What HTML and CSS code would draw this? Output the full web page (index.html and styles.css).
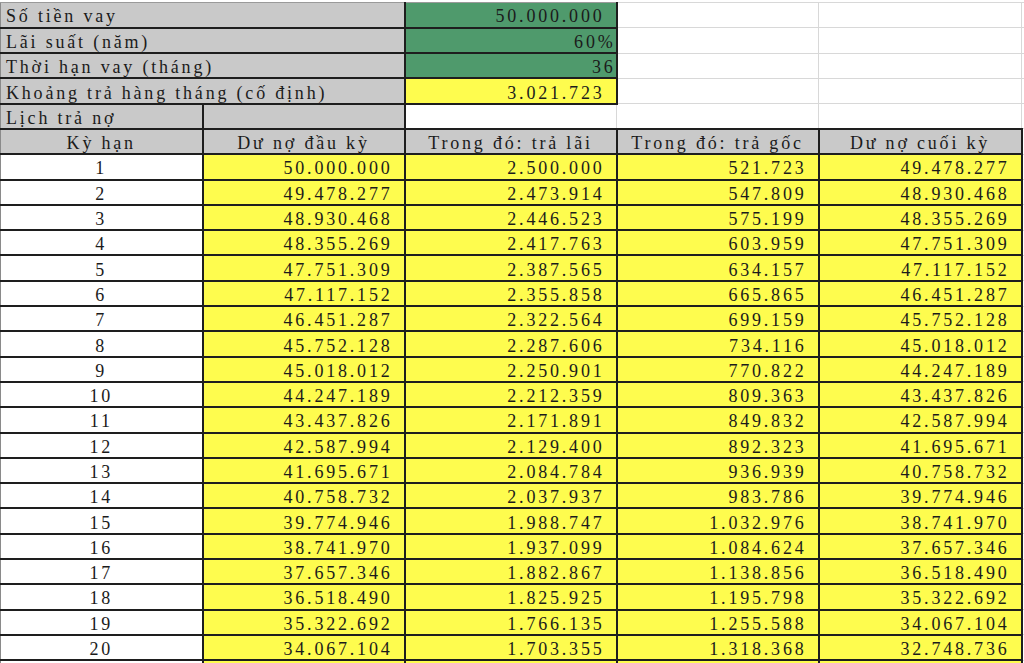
FILE: index.html
```html
<!DOCTYPE html>
<html lang="vi">
<head>
<meta charset="utf-8">
<title>Lịch trả nợ</title>
<link rel="stylesheet" href="styles.css">
</head>
<body>
<table class="sheet">
  <colgroup>
    <col class="c-a"><col class="c-b"><col class="c-c"><col class="c-d"><col class="c-e"><col class="c-f">
  </colgroup>
  <tbody>
    <tr class="first">
      <td class="label" colspan="2">Số tiền vay</td>
      <td class="green num">50.000.000</td>
      <td class="grid"></td><td class="grid"></td><td class="grid"></td>
    </tr>
    <tr>
      <td class="label" colspan="2">Lãi suất (năm)</td>
      <td class="green raw">60%</td>
      <td class="grid"></td><td class="grid"></td><td class="grid"></td>
    </tr>
    <tr>
      <td class="label" colspan="2">Thời hạn vay (tháng)</td>
      <td class="green raw">36</td>
      <td class="grid"></td><td class="grid"></td><td class="grid"></td>
    </tr>
    <tr>
      <td class="label" colspan="2">Khoảng trả hàng tháng (cố định)</td>
      <td class="yellow num">3.021.723</td>
      <td class="grid"></td><td class="grid"></td><td class="grid"></td>
    </tr>
    <tr>
      <td class="label">Lịch trả nợ</td>
      <td class="label"></td>
      <td class="grid blank"></td>
      <td class="grid"></td><td class="grid"></td><td class="grid"></td>
    </tr>
    <tr class="head">
      <th>Kỳ hạn</th>
      <th>Dư nợ đầu kỳ</th>
      <th>Trong đó: trả lãi</th>
      <th>Trong đó: trả gốc</th>
      <th>Dư nợ cuối kỳ</th>
      <td class="grid"></td>
    </tr>
    <tr><td class="idx">1</td><td class="yellow num">50.000.000</td><td class="yellow num">2.500.000</td><td class="yellow num">521.723</td><td class="yellow num">49.478.277</td><td class="grid"></td></tr>
    <tr><td class="idx">2</td><td class="yellow num">49.478.277</td><td class="yellow num">2.473.914</td><td class="yellow num">547.809</td><td class="yellow num">48.930.468</td><td class="grid"></td></tr>
    <tr><td class="idx">3</td><td class="yellow num">48.930.468</td><td class="yellow num">2.446.523</td><td class="yellow num">575.199</td><td class="yellow num">48.355.269</td><td class="grid"></td></tr>
    <tr><td class="idx">4</td><td class="yellow num">48.355.269</td><td class="yellow num">2.417.763</td><td class="yellow num">603.959</td><td class="yellow num">47.751.309</td><td class="grid"></td></tr>
    <tr><td class="idx">5</td><td class="yellow num">47.751.309</td><td class="yellow num">2.387.565</td><td class="yellow num">634.157</td><td class="yellow num">47.117.152</td><td class="grid"></td></tr>
    <tr><td class="idx">6</td><td class="yellow num">47.117.152</td><td class="yellow num">2.355.858</td><td class="yellow num">665.865</td><td class="yellow num">46.451.287</td><td class="grid"></td></tr>
    <tr><td class="idx">7</td><td class="yellow num">46.451.287</td><td class="yellow num">2.322.564</td><td class="yellow num">699.159</td><td class="yellow num">45.752.128</td><td class="grid"></td></tr>
    <tr><td class="idx">8</td><td class="yellow num">45.752.128</td><td class="yellow num">2.287.606</td><td class="yellow num">734.116</td><td class="yellow num">45.018.012</td><td class="grid"></td></tr>
    <tr><td class="idx">9</td><td class="yellow num">45.018.012</td><td class="yellow num">2.250.901</td><td class="yellow num">770.822</td><td class="yellow num">44.247.189</td><td class="grid"></td></tr>
    <tr><td class="idx">10</td><td class="yellow num">44.247.189</td><td class="yellow num">2.212.359</td><td class="yellow num">809.363</td><td class="yellow num">43.437.826</td><td class="grid"></td></tr>
    <tr><td class="idx">11</td><td class="yellow num">43.437.826</td><td class="yellow num">2.171.891</td><td class="yellow num">849.832</td><td class="yellow num">42.587.994</td><td class="grid"></td></tr>
    <tr><td class="idx">12</td><td class="yellow num">42.587.994</td><td class="yellow num">2.129.400</td><td class="yellow num">892.323</td><td class="yellow num">41.695.671</td><td class="grid"></td></tr>
    <tr><td class="idx">13</td><td class="yellow num">41.695.671</td><td class="yellow num">2.084.784</td><td class="yellow num">936.939</td><td class="yellow num">40.758.732</td><td class="grid"></td></tr>
    <tr><td class="idx">14</td><td class="yellow num">40.758.732</td><td class="yellow num">2.037.937</td><td class="yellow num">983.786</td><td class="yellow num">39.774.946</td><td class="grid"></td></tr>
    <tr><td class="idx">15</td><td class="yellow num">39.774.946</td><td class="yellow num">1.988.747</td><td class="yellow num">1.032.976</td><td class="yellow num">38.741.970</td><td class="grid"></td></tr>
    <tr><td class="idx">16</td><td class="yellow num">38.741.970</td><td class="yellow num">1.937.099</td><td class="yellow num">1.084.624</td><td class="yellow num">37.657.346</td><td class="grid"></td></tr>
    <tr><td class="idx">17</td><td class="yellow num">37.657.346</td><td class="yellow num">1.882.867</td><td class="yellow num">1.138.856</td><td class="yellow num">36.518.490</td><td class="grid"></td></tr>
    <tr><td class="idx">18</td><td class="yellow num">36.518.490</td><td class="yellow num">1.825.925</td><td class="yellow num">1.195.798</td><td class="yellow num">35.322.692</td><td class="grid"></td></tr>
    <tr><td class="idx">19</td><td class="yellow num">35.322.692</td><td class="yellow num">1.766.135</td><td class="yellow num">1.255.588</td><td class="yellow num">34.067.104</td><td class="grid"></td></tr>
    <tr><td class="idx">20</td><td class="yellow num">34.067.104</td><td class="yellow num">1.703.355</td><td class="yellow num">1.318.368</td><td class="yellow num">32.748.736</td><td class="grid"></td></tr>
    <tr class="cut"><td class="idx"></td><td class="yellow"></td><td class="yellow"></td><td class="yellow"></td><td class="yellow"></td><td class="grid"></td></tr>
  </tbody>
</table>
</body>
</html>
```
FILE: styles.css
```css
html, body {
  margin: 0;
  padding: 0;
  background: #ffffff;
  overflow: hidden;
  height: 663px;
}

.sheet {
  margin-top: 2px;
  width: 1024px;
  table-layout: fixed;
  border-collapse: collapse;
  font-family: "Liberation Serif", "DejaVu Serif", serif;
  font-size: 18px;
  letter-spacing: 2.8px;
  color: #1b1b1b;
}

.c-a { width: 202px; }
.c-b { width: 202px; }
.c-c { width: 212px; }
.c-d { width: 202px; }
.c-e { width: 203px; }
.c-f { width: 3px; }

.sheet tr { height: 25.3px; }

.sheet td, .sheet th {
  padding: 3px 0 0 0;
  line-height: 20px;
  white-space: nowrap;
  overflow: hidden;
  vertical-align: middle;
  font-weight: normal;
  border: 2px solid #1e1e1e;
}

.sheet .grid {
  border: 1px solid #d8d8d8;
  background: #ffffff;
}

.sheet .blank {
  border-left: 2px solid #1e1e1e;
}

.label {
  background: #c9c9c9;
  text-align: left;
  padding-left: 5px !important;
}

.sheet tr.first td.label,
.sheet tr.first td.green {
  border-top: 1px solid #9a9a9a;
}

.green {
  background: #4f9a6c;
  text-align: right;
}

.yellow {
  background: #fefc4e;
  text-align: right;
}

.num { padding-right: 11px !important; }
.raw { padding-right: 0 !important; }

.head th {
  background: #c9c9c9;
  text-align: center;
}

.idx {
  background: #ffffff;
  text-align: center;
}

.sheet td:first-child, .sheet th:first-child {
  border-left: 1px solid #8a8a8a;
}
```
